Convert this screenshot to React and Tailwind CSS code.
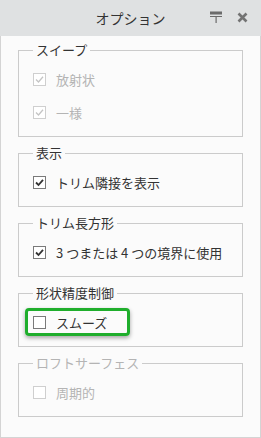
import React from "react";

const font = { fontFamily: '"Noto Sans CJK JP", "Noto Sans", sans-serif' };

const CheckBox = ({ checked, disabled }) => (
  <span
    className={`flex h-[13px] w-[13px] shrink-0 items-center justify-center border bg-white ${
      disabled ? "border-[#cfcfcf]" : "border-[#7a7a7a]"
    }`}
  >
    {checked && (
      <svg width="11" height="11" viewBox="0 0 11 11">
        <path
          d="M2 5.5 L4.5 8 L9 2.8"
          fill="none"
          stroke={disabled ? "#c4c4c4" : "#333333"}
          strokeWidth={disabled ? "1.3" : "1.8"}
        />
      </svg>
    )}
  </span>
);

const Row = ({ label, checked, disabled }) => (
  <div className="flex h-[26px] items-center gap-[10px]">
    <CheckBox checked={checked} disabled={disabled} />
    <span className={`text-[13px] leading-none ${disabled ? "text-[#b4b4b4]" : "text-[#333333]"}`}>{label}</span>
  </div>
);

const Group = ({ title, disabled, children }) => (
  <fieldset className="border border-[#cbcbcb] px-[14px] pb-[11px]">
    <legend className={`px-[3px] text-[13px] leading-[16px] ${disabled ? "text-[#b4b4b4]" : "text-[#333333]"}`}>
      {title}
    </legend>
    <div className="flex flex-col gap-[7px] pt-[8px]">{children}</div>
  </fieldset>
);

const App = () => {
  return (
    <div className="flex h-[438px] w-[261px] flex-col bg-[#fbfbfb]" style={font}>
      <div className="relative flex h-[36px] shrink-0 items-center justify-center bg-[#dfe1e2]">
        <span className="text-[14px] text-[#333333]">オプション</span>
        <div className="absolute right-[13px] top-[11px] flex items-center gap-[15px]">
          <svg width="12" height="12" viewBox="0 0 12 12">
            <rect x="0" y="0.5" width="12" height="3" fill="#6b6b6b" />
            <rect x="0" y="5" width="12" height="1" fill="#6b6b6b" />
            <rect x="5.5" y="5" width="1.2" height="7" fill="#6b6b6b" />
          </svg>
          <svg width="11" height="11" viewBox="0 0 11 11">
            <path d="M1.5 1.5 L9.5 9.5 M9.5 1.5 L1.5 9.5" stroke="#737373" strokeWidth="2.6" />
          </svg>
        </div>
      </div>

      <div className="flex flex-1 flex-col gap-[8px] border-x border-b border-[#d4d4d4] px-[17px] pt-[6px]">
        <Group title="スイープ">
          <Row label="放射状" checked disabled />
          <Row label="一様" checked disabled />
        </Group>

        <Group title="表示">
          <Row label="トリム隣接を表示" checked />
        </Group>

        <Group title="トリム長方形">
          <Row label="3 つまたは 4 つの境界に使用" checked />
        </Group>

        <Group title="形状精度制御">
          <div className="-my-[1px]">
            <div className="-ml-[8px] w-[105px] rounded-[4px] border-[3px] border-[#1fae2c] pl-[5px] shadow-[0_2px_4px_rgba(0,0,0,0.35)]">
              <div className="-my-[2px]">
                <Row label="スムーズ" />
              </div>
            </div>
          </div>
        </Group>

        <Group title="ロフトサーフェス" disabled>
          <Row label="周期的" disabled />
        </Group>
      </div>
    </div>
  );
};

export default App;
